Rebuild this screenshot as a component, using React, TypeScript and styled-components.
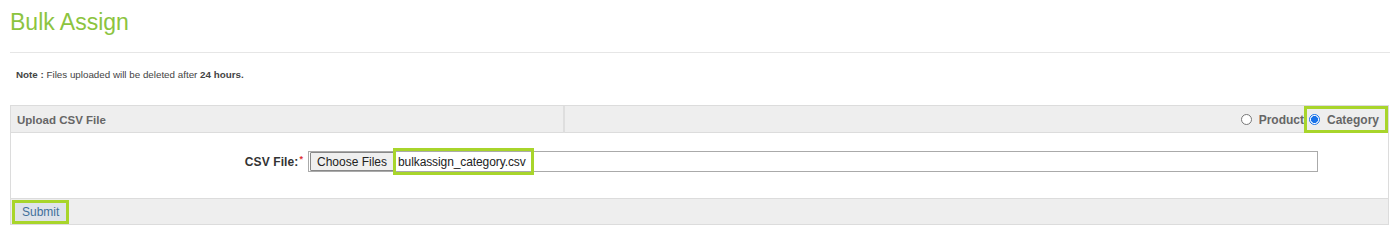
import styled, { createGlobalStyle } from 'styled-components';

const GlobalStyle = createGlobalStyle`
	body {
		margin: 0;
		background: #fff;
		font-family: 'Liberation Sans', Arial, sans-serif;
	}
`;

const HIGHLIGHT = '#a8d52b';

const Page = styled.div`
	padding: 0 10px;
	width: 1380px;
`;

const Title = styled.h2`
	margin: 0;
	padding-top: 9px;
	height: 43px;
	font-size: 23px;
	line-height: 26px;
	font-weight: normal;
	color: #8cc43f;
	border-bottom: 1px solid #e6e6e6;
`;

const Note = styled.p`
	margin: 0;
	padding: 16px 0 0 6px;
	height: 36px;
	font-size: 9.8px;
	line-height: 11px;
	color: #444;

	b {
		font-weight: bold;
	}
`;

const Table = styled.div`
	width: 1379px;
	border: 1px solid #dcdcdc;
	box-sizing: border-box;
`;

const HeaderRow = styled.div`
	display: grid;
	grid-template-columns: 552px 1fr;
	height: 26px;
	background: #eeeeee;
	border-bottom: 1px solid #dcdcdc;
`;

const HeaderCell = styled.div<{ $right?: boolean }>`
	display: flex;
	align-items: center;
	justify-content: ${(p) => (p.$right ? 'flex-end' : 'flex-start')};
	padding: 0 ${(p) => (p.$right ? '0' : '6px')};
	font-size: 11.5px;
	font-weight: bold;
	color: #666;
	border-left: ${(p) => (p.$right ? '2px solid #dedede' : 'none')};
`;

const RadioOption = styled.label<{ $marked?: boolean }>`
	display: flex;
	align-items: center;
	height: 21px;
	padding: 0 ${(p) => (p.$marked ? '6px' : '0')} 0 ${(p) => (p.$marked ? '2px' : '4px')};
	font-size: 12px;
	font-weight: bold;
	color: #666;
	border: 3px solid ${(p) => (p.$marked ? HIGHLIGHT : 'transparent')};
	margin-right: ${(p) => (p.$marked ? '0' : '-3px')};
`;

const Radio = styled.span<{ $checked?: boolean }>`
	width: 11px;
	height: 11px;
	border-radius: 50%;
	margin-right: 7px;
	box-sizing: border-box;
	border: ${(p) => (p.$checked ? '1px solid #1a73e8' : '1px solid #777')};
	background: ${(p) => (p.$checked ? 'radial-gradient(circle, #1a73e8 0 3.2px, #fff 3.8px)' : '#fff')};
`;

const BodyRow = styled.div`
	display: flex;
	align-items: flex-start;
	height: 65px;
	padding: 18px 0 0 210px;
	box-sizing: border-box;
`;

const FieldLabel = styled.span`
	width: 82px;
	height: 21px;
	display: flex;
	align-items: center;
	justify-content: flex-end;
	font-size: 12px;
	font-weight: bold;
	color: #333;
	letter-spacing: 0.1px;

	em {
		color: #d33;
		font-style: normal;
		font-size: 9px;
		align-self: flex-start;
		margin: 3px 0 0 1px;
	}
`;

const FileInput = styled.div`
	margin-left: 5px;
	width: 1010px;
	height: 21px;
	border: 1px solid #aaa;
	box-sizing: border-box;
	display: flex;
	align-items: center;
	background: #fff;
`;

const ChooseButton = styled.span`
	height: 17px;
	margin-left: 1px;
	padding: 0 6px;
	display: flex;
	align-items: center;
	background: #efefef;
	border: 1px solid #888;
	border-radius: 1px;
	font-size: 12px;
	color: #222;
`;

const FileName = styled.span`
	height: 21px;
	margin-left: -1px;
	padding: 0 5px 0 2px;
	display: flex;
	align-items: center;
	border: 3px solid ${HIGHLIGHT};
	font-size: 12px;
	color: #222;
	letter-spacing: -0.1px;
`;

const FooterRow = styled.div`
	display: flex;
	align-items: center;
	height: 25px;
	background: #eeeeee;
	border-top: 1px solid #dcdcdc;
	padding-left: 1px;
`;

const SubmitButton = styled.button`
	height: 24px;
	padding: 0 7px;
	background: #dfe3ea;
	border: 3px solid ${HIGHLIGHT};
	font-family: 'Liberation Sans', Arial, sans-serif;
	font-size: 12px;
	color: #3f6f9a;
	cursor: pointer;
`;

export default function App() {
	return (
		<>
			<GlobalStyle />
			<Page>
				<Title>Bulk Assign</Title>
				<Note>
					<b>Note :</b> Files uploaded will be deleted after <b>24 hours.</b>
				</Note>
				<Table>
					<HeaderRow>
						<HeaderCell>Upload CSV File</HeaderCell>
						<HeaderCell $right>
							<RadioOption>
								<Radio />
								Product
							</RadioOption>
							<RadioOption $marked>
								<Radio $checked />
								Category
							</RadioOption>
						</HeaderCell>
					</HeaderRow>
					<BodyRow>
						<FieldLabel>
							CSV File:<em>*</em>
						</FieldLabel>
						<FileInput>
							<ChooseButton>Choose Files</ChooseButton>
							<FileName>bulkassign_category.csv</FileName>
						</FileInput>
					</BodyRow>
					<FooterRow>
						<SubmitButton type="button">Submit</SubmitButton>
					</FooterRow>
				</Table>
			</Page>
		</>
	);
}
